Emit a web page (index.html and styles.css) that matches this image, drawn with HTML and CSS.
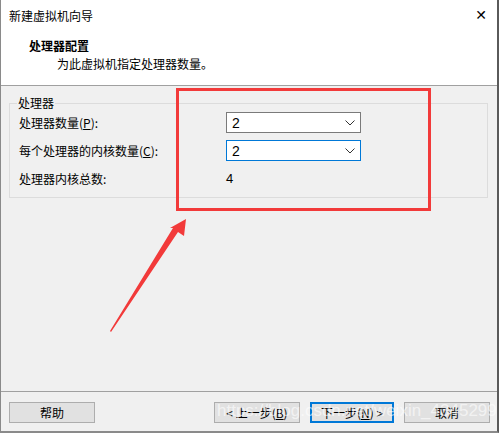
FILE: index.html
```html
<!DOCTYPE html>
<html lang="zh-CN">
<head>
    <meta charset="UTF-8">
    <title>新建虚拟机向导</title>
    <link rel="stylesheet" href="styles.css">
</head>
<body>
    <div class="window">
        <div class="top">
            <div class="titlebar">
                <span class="title">新建虚拟机向导</span>
                <span class="close">✕</span>
            </div>
            <div class="heading">处理器配置</div>
            <div class="subheading">为此虚拟机指定处理器数量。</div>
        </div>

        <div class="content">
            <fieldset class="group">
                <legend>处理器</legend>
                <div class="grid">
                    <label>处理器数量(<u>P</u>):</label>
                    <div class="select">
                        <span>2</span>
                        <svg width="10" height="6" viewBox="0 0 10 6"><path d="M0.5 0.5 L5 5 L9.5 0.5" fill="none" stroke="#333" stroke-width="1"/></svg>
                    </div>
                    <label>每个处理器的内核数量(<u>C</u>):</label>
                    <div class="select focused">
                        <span>2</span>
                        <svg width="10" height="6" viewBox="0 0 10 6"><path d="M0.5 0.5 L5 5 L9.5 0.5" fill="none" stroke="#333" stroke-width="1"/></svg>
                    </div>
                    <label>处理器内核总数:</label>
                    <div class="value">4</div>
                </div>
            </fieldset>
        </div>

        <div class="footer">
            <button class="btn">帮助</button>
            <div class="nav">
                <button class="btn">&lt; 上一步(<u>B</u>)</button>
                <button class="btn primary">下一步(<u>N</u>) &gt;</button>
                <button class="btn">取消</button>
            </div>
        </div>

        <!-- 标注 -->
        <div class="mark"></div>
        <svg class="arrow" width="499" height="433" viewBox="0 0 499 433">
            <polygon points="185,219 183,236 177,232 110,332 109,331 172,228 169,228" fill="#f23a3a"/>
        </svg>
        <div class="watermark">https://blog.csdn.net/weixin_43452997</div>
    </div>
</body>
</html>
```

FILE: styles.css
```css
body {
    margin: 0;
    font-family: "Noto Sans CJK SC", "Noto Sans", sans-serif;
    font-size: 12px;
    color: #000;
}

.window {
    position: relative;
    width: 499px;
    height: 433px;
    box-sizing: border-box;
    background: #f0f0f0;
    border-left: 1px solid #8a8a8a;
    border-right: 2px solid #5a5a5a;
    border-bottom: 2px solid #8a8a8a;
    display: flex;
    flex-direction: column;
    overflow: hidden;
}

.top {
    background: #fff;
    height: 86px;
    box-sizing: border-box;
    border-bottom: 1px solid #a0a0a0;
}

.titlebar {
    height: 30px;
    display: flex;
    align-items: center;
    justify-content: space-between;
    padding: 0 10px 0 8px;
}

.close {
    font-size: 14px;
    font-family: "DejaVu Sans", sans-serif;
}

.heading {
    font-weight: bold;
    margin-left: 28px;
    margin-top: 8px;
    line-height: 16px;
}

.subheading {
    margin-left: 56px;
    line-height: 16px;
    margin-top: 2px;
}

.content {
    flex: 1;
    padding: 10px 9px 0 8px;
}

.group {
    margin: 0;
    padding: 2px 9px 9px 9px;
    border: 1px solid #dcdcdc;
    height: 102px;
    box-sizing: border-box;
}

.group legend {
    padding: 0 1px;
    margin-left: -2px;
    line-height: 14px;
}

.grid {
    display: grid;
    grid-template-columns: 207px 135px;
    grid-auto-rows: 21px;
    row-gap: 7px;
    align-items: center;
}

.select {
    height: 21px;
    box-sizing: border-box;
    background: #fff;
    border: 1px solid #7a7a7a;
    display: flex;
    align-items: center;
    justify-content: space-between;
    padding: 0 5px 0 5px;
    font-size: 14px;
    font-family: "Liberation Sans", sans-serif;
}

.select.focused {
    border-color: #0078d7;
}

.value {
    font-family: "Liberation Sans", sans-serif;
    font-size: 13px;
}

.footer {
    height: 40px;
    border-top: 1px solid #a0a0a0;
    display: flex;
    justify-content: space-between;
    align-items: flex-start;
    padding: 10px 7px 0 8px;
    box-sizing: border-box;
}

.nav {
    display: flex;
    gap: 10px;
}

.btn {
    width: 86px;
    height: 21px;
    background: #e1e1e1;
    border: 1px solid #adadad;
    font-family: "Noto Sans CJK SC", sans-serif;
    font-size: 12px;
    padding: 0;
    color: #000;
    box-sizing: border-box;
}

.btn.primary {
    width: 84px;
    border: 2px solid #0078d7;
}

.mark {
    position: absolute;
    left: 175px;
    top: 88px;
    width: 255px;
    height: 123px;
    box-sizing: border-box;
    border: 3px solid #f23a3a;
}

.arrow {
    position: absolute;
    left: 0;
    top: 0;
}

.watermark {
    position: absolute;
    left: 216px;
    top: 401px;
    font-family: "Liberation Sans", sans-serif;
    font-size: 17px;
    color: rgba(255, 255, 255, 0.6);
    pointer-events: none;
}
```
